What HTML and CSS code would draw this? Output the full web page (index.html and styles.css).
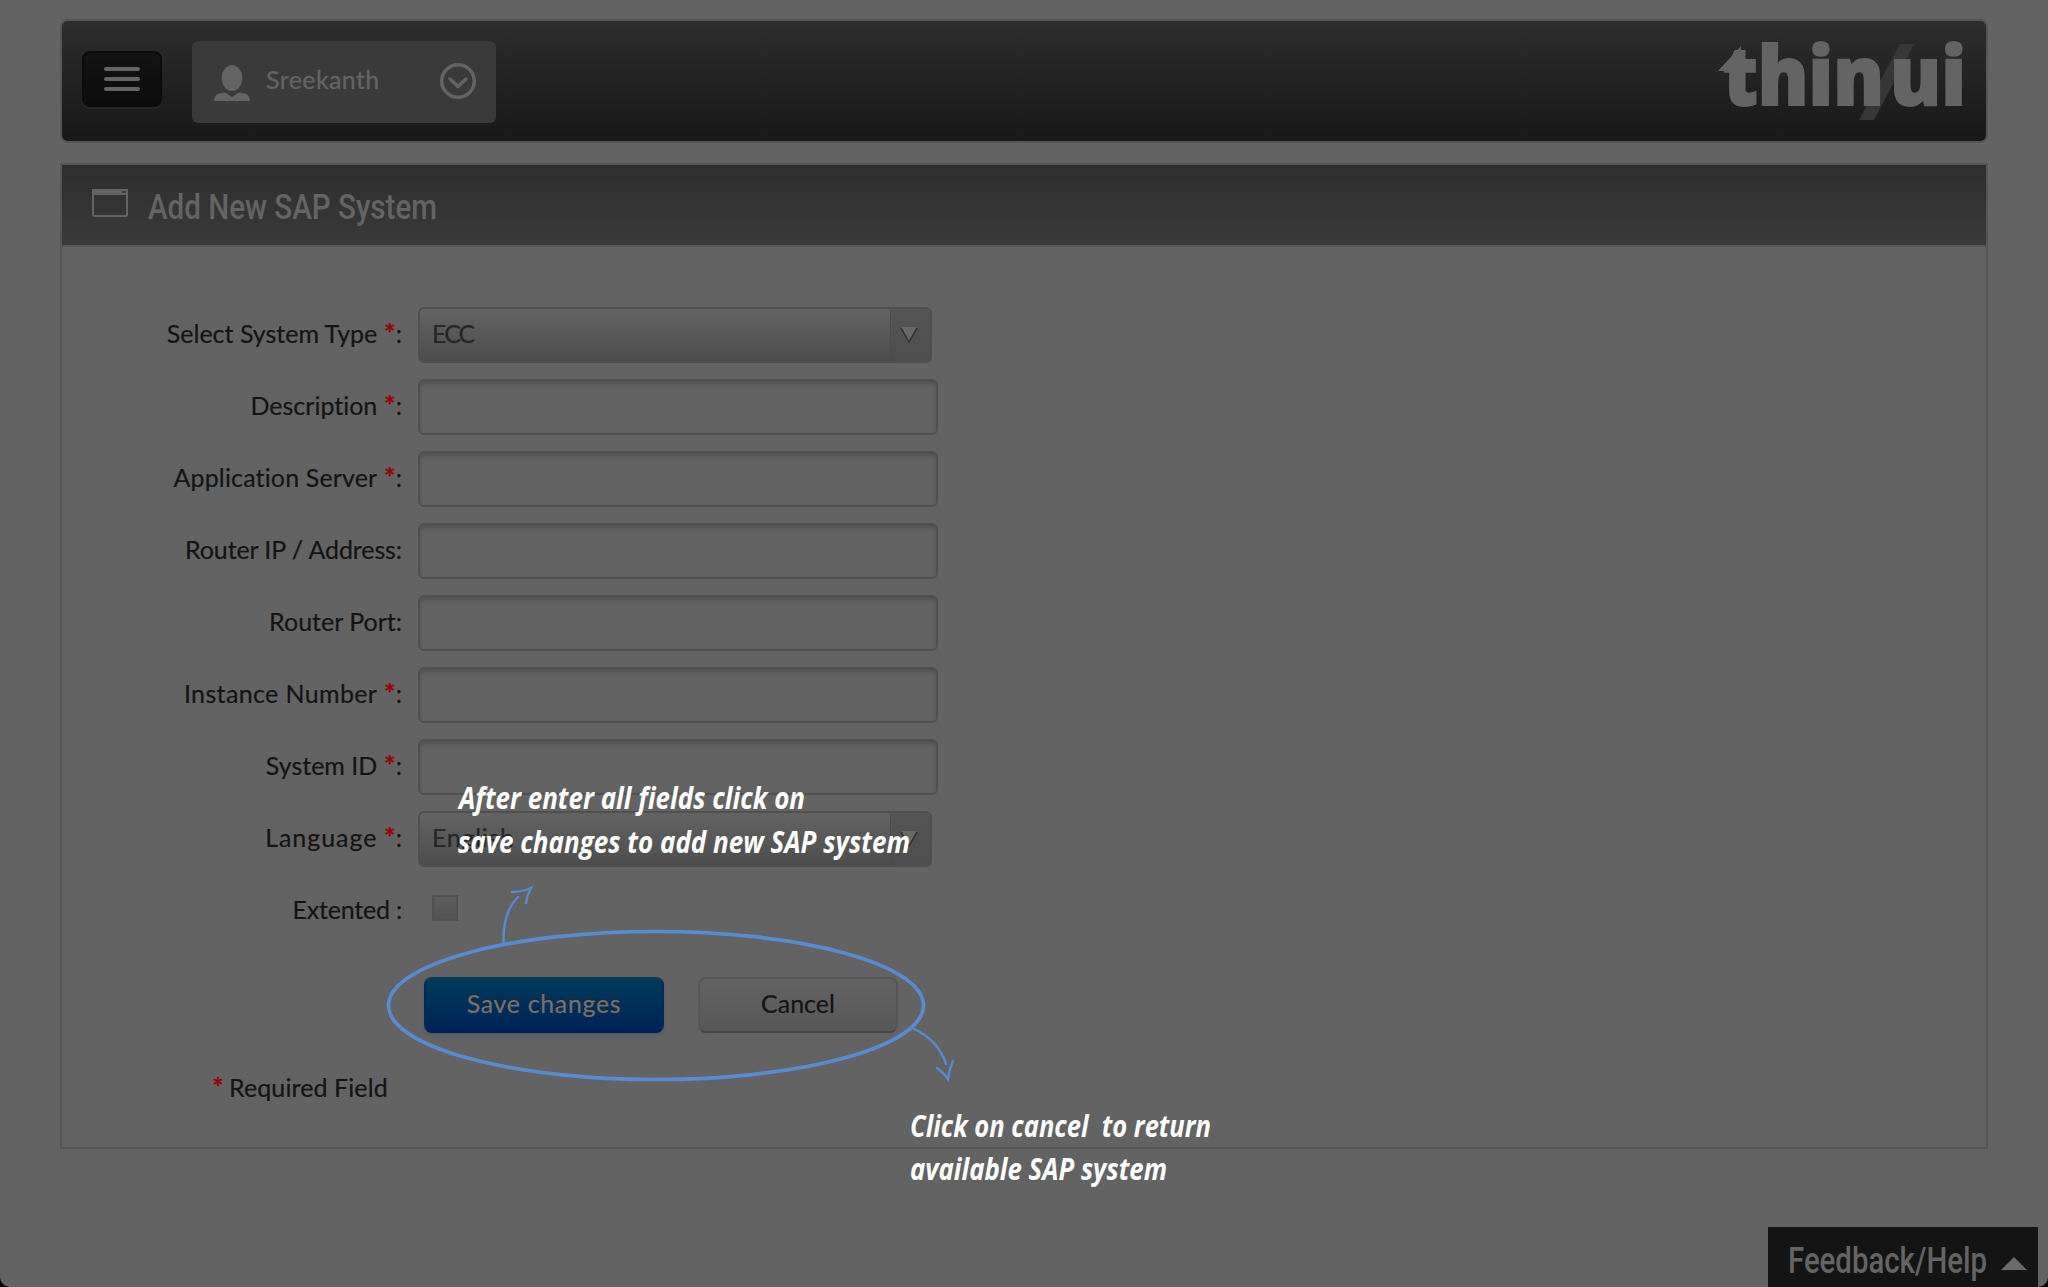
FILE: index.html
```html
<!DOCTYPE html>
<html lang="en">
<head>
<meta charset="utf-8">
<title>Add New SAP System</title>
<link rel="stylesheet" href="styles.css">
</head>
<body>
<div class="page">
  <header class="topbar">
    <button class="menu" aria-label="Menu"><i></i><i></i><i></i></button>
    <div class="user">
      <svg class="avatar" width="36" height="36" viewBox="0 0 36 36"><ellipse cx="18" cy="13" rx="10.3" ry="13"/><path d="M0 36C0 30 4 28 11 27.5L18 32l7-4.500C32 28 36 30 36 36z"/></svg>
      <span class="user-name">Sreekanth</span>
      <svg class="chevron" width="36" height="36" viewBox="0 0 36 36"><circle cx="18" cy="18" r="16.300"/><path d="M10 16l8 7.500 8-7.500"/></svg>
    </div>
    <svg class="logo" width="250" height="100" viewBox="0 0 250 100">
      <path class="slash" d="M184 6h14L158 82h-15z"/>
      <path class="leaf" d="M2 33L25 8v25z"/>
      <text x="7" y="67" textLength="161" lengthAdjust="spacingAndGlyphs">thin</text>
      <text x="174" y="67" textLength="76" lengthAdjust="spacingAndGlyphs">ui</text>
    </svg>
  </header>

  <main class="panel">
    <div class="panel-head">
      <svg class="window" width="36" height="28" viewBox="0 0 36 28"><rect x="1" y="1" width="34" height="26" rx="1.500"/><path d="M0 0h36v6H0z"/><path class="dash" d="M30 3h4"/></svg>
      <svg class="title" width="300" height="56"><text x="-1" y="34" textLength="289" lengthAdjust="spacingAndGlyphs">Add New SAP System</text></svg>
    </div>
    <form class="form">
      <div class="row"><label><span class="type">Select System Type</span> <b>*</b>:</label><div class="select"><span class="ecc">ECC</span><div class="drop"><svg width="18" height="18"><path class="tri" d="M1 1h16L9 16z"/><path class="edge" d="M1 2l8 14 8-14"/></svg></div></div></div>
      <div class="row"><label><span class="description">Description</span> <b>*</b>:</label><input></div>
      <div class="row"><label><span class="server">Application Server</span> <b>*</b>:</label><input></div>
      <div class="row"><label><span class="router">Router IP / Address:</span></label><input></div>
      <div class="row"><label><span>Router Port:</span></label><input></div>
      <div class="row"><label><span class="instance">Instance Number</span> <b>*</b>:</label><input></div>
      <div class="row"><label><span class="system">System ID</span> <b>*</b>:</label><input></div>
      <div class="row"><label><span class="language">Language</span> <b>*</b>:</label><div class="select"><span class="english">English</span><div class="drop"><svg width="18" height="18"><path class="tri" d="M1 1h16L9 16z"/><path class="edge" d="M1 2l8 14 8-14"/></svg></div></div></div>
      <div class="row"><label><span class="extended">Extented :</span></label><div class="check"></div></div>
      <div class="actions"><button type="button" class="save">Save changes</button><button type="button" class="cancel">Cancel</button></div>
      <p class="required"><b>*</b><span>Required Field</span></p>
    </form>
  </main>
</div>

<aside class="feedback">
  <svg width="200" height="60"><text x="-1" y="46" textLength="199" lengthAdjust="spacingAndGlyphs">Feedback/Help</text></svg>
  <i></i>
</aside>

<svg class="tour" width="2048" height="1287">
  <ellipse cx="656" cy="1005.500" rx="267.500" ry="74"/>
  <path d="M503.500 942C503 922 508 907 518 897M512 892Q522 892 531 888Q527 895 526 903"/>
  <path d="M914 1029Q938 1040 946 1064M937 1068Q943 1072 948 1079Q949 1070 953 1061"/>
  <g class="note">
    <text x="459" y="809" textLength="346" lengthAdjust="spacingAndGlyphs">After enter all fields click on</text>
    <text x="458" y="852.500" textLength="452" lengthAdjust="spacingAndGlyphs">save changes to add new SAP system</text>
    <text x="910" y="1137" xml:space="preserve" textLength="301" lengthAdjust="spacingAndGlyphs">Click on cancel  to return</text>
    <text x="910" y="1180" textLength="257" lengthAdjust="spacingAndGlyphs">available SAP system</text>
  </g>
  <path class="corner" d="M0 1277v10h10A10 10 0 0 1 0 1277zM2048 1277v10h-10A10 10 0 0 0 2048 1277z"/>
</svg>
</body>
</html>
```
FILE: styles.css
```css
* { box-sizing: border-box; }
body { margin: 0; background: #636363; color: #141414; font: 25px/32px Lato, "Noto Sans", sans-serif; font-variant-ligatures: none; }
.page { height: 1287px; padding: 19px 60px 0; overflow: hidden; }
svg { display: block; flex: none; overflow: visible; }

.topbar { display: flex; align-items: flex-start; height: 124px; padding: 20px 20px 0; border: 2px solid #565656; border-radius: 7px; background: linear-gradient(#2d2d2d, #181818) padding-box; }
.menu { display: flex; flex-direction: column; align-items: center; justify-content: center; gap: 6px; width: 80px; height: 56px; margin: 10px 30px 0 0; padding: 0; border: 2px solid #0b0b0b; border-radius: 8px; background: linear-gradient(#141414, #0c0c0c); box-shadow: 0 2px 0 #292929; }
.menu i { width: 36px; height: 4px; border-radius: 2px; background: #646464; }
.user { display: flex; align-items: flex-start; width: 304px; height: 82px; padding: 24px 20px 0 22px; border-radius: 6px; background: #3a3a3a; color: #646464; }
.avatar { fill: #646464; }
.user-name { flex: 1; padding-left: 16px; margin-top: -2px; letter-spacing: .4px; -webkit-text-stroke: .3px; }
.chevron { margin-top: -2px; fill: none; stroke: #646464; stroke-width: 3.5; stroke-linecap: round; stroke-linejoin: round; }
.logo { margin: -3px 0 0 auto; font: 800 81px "Open Sans", sans-serif; fill: #646464; }
.logo text { stroke: #646464; stroke-width: 2; }
.slash { fill: #373737; }

.panel { height: 986px; margin-top: 20px; border: 2px solid #555; }
.panel-head { display: flex; height: 82px; padding: 24px 30px 0; gap: 21px; border-bottom: 2px solid #555; background: linear-gradient(#2e2e2e, #3a3a3a) padding-box; }
.window { fill: #646464; }
.window rect { fill: none; stroke: #646464; stroke-width: 2; }
.dash { stroke: #3a3a3a; stroke-width: 2; }
.title { margin-top: -4px; font: 500 35px Roboto, sans-serif; fill: #646464; }

.form { padding-top: 60px; }
.row { display: flex; align-items: flex-start; height: 72px; }
label { width: 340px; margin-right: 16px; padding-top: 10px; text-align: right; white-space: nowrap; }
label, .select span, .required { -webkit-text-stroke: .2px; }
b { display: inline-block; width: 12px; color: #960000; font-weight: 700; font-size: 27px; line-height: 24px; text-align: center; }
.server { letter-spacing: .15px; }
.router { letter-spacing: -.1px; }
.instance { letter-spacing: .37px; }
.language { letter-spacing: .95px; }
.extended { letter-spacing: -.2px; }
input, .select { height: 56px; border: 2px solid #505050; border-radius: 6px; }
input { width: 520px; padding: 0 12px; background: #636363; box-shadow: inset 0 3px 4px #525252; font: inherit; }
.select { display: flex; justify-content: space-between; width: 514px; padding-left: 12px; background: linear-gradient(#636363, #4d4d4d); color: #262626; }
.select span { padding-top: 8px; }
.select .ecc { letter-spacing: -1.9px; }
.select .english { letter-spacing: .7px; }
.drop { width: 40px; border-left: 1px solid #4b4b4b; border-radius: 0 4px 4px 0; padding: 17px 0 0 9px; background: linear-gradient(#555, #4e4e4e); }
.tri { fill: #686868; }
.edge { fill: none; stroke: #303030; stroke-width: 1.5; }
.check { width: 26px; height: 26px; margin: 12px 0 0 14px; border: 2px solid #515151; background: linear-gradient(#5e5e5e, #535353); }
.actions { display: flex; gap: 34px; margin-top: 22px; padding-left: 362px; }
.actions button { height: 56px; padding: 0 0 5px; border-radius: 8px; font: inherit; -webkit-text-stroke: .2px; }
.actions .save { width: 240px; border: 2px solid; border-color: #003a55 #002a57 #002050; background: linear-gradient(#003c59, #002158) border-box; color: #727272; letter-spacing: .65px; text-shadow: 0 -1px 1px #222; box-shadow: 0 2px 3px #595959; }
.cancel { width: 200px; border: 2px solid #565656; border-bottom-color: #454545; background: linear-gradient(#626262, #585858); color: #141414; }
.required { display: flex; gap: 5px; margin: 38px 0 0; padding-left: 150px; letter-spacing: .1px; }
.required b { line-height: 32px; }

.feedback { position: absolute; left: 1768px; top: 1227px; display: flex; width: 270px; height: 60px; padding-left: 21px; background: #141414; font: 500 36px Roboto, sans-serif; fill: #646464; }
.feedback i { width: 0; height: 0; margin: 30px 0 0 12px; border: 13px solid transparent; border-top: 0; border-bottom: 13px solid #6b6b6b; }
.tour { position: absolute; left: 0; top: 0; overflow: hidden; fill: none; stroke: #598bd3; stroke-width: 2.4; stroke-linecap: round; pointer-events: none; }
.tour ellipse { stroke-width: 3.7; }
.note { fill: #fff; stroke: none; font: italic 700 31px "Open Sans", sans-serif; }
.tour .corner { fill: #000; stroke: none; }
```
